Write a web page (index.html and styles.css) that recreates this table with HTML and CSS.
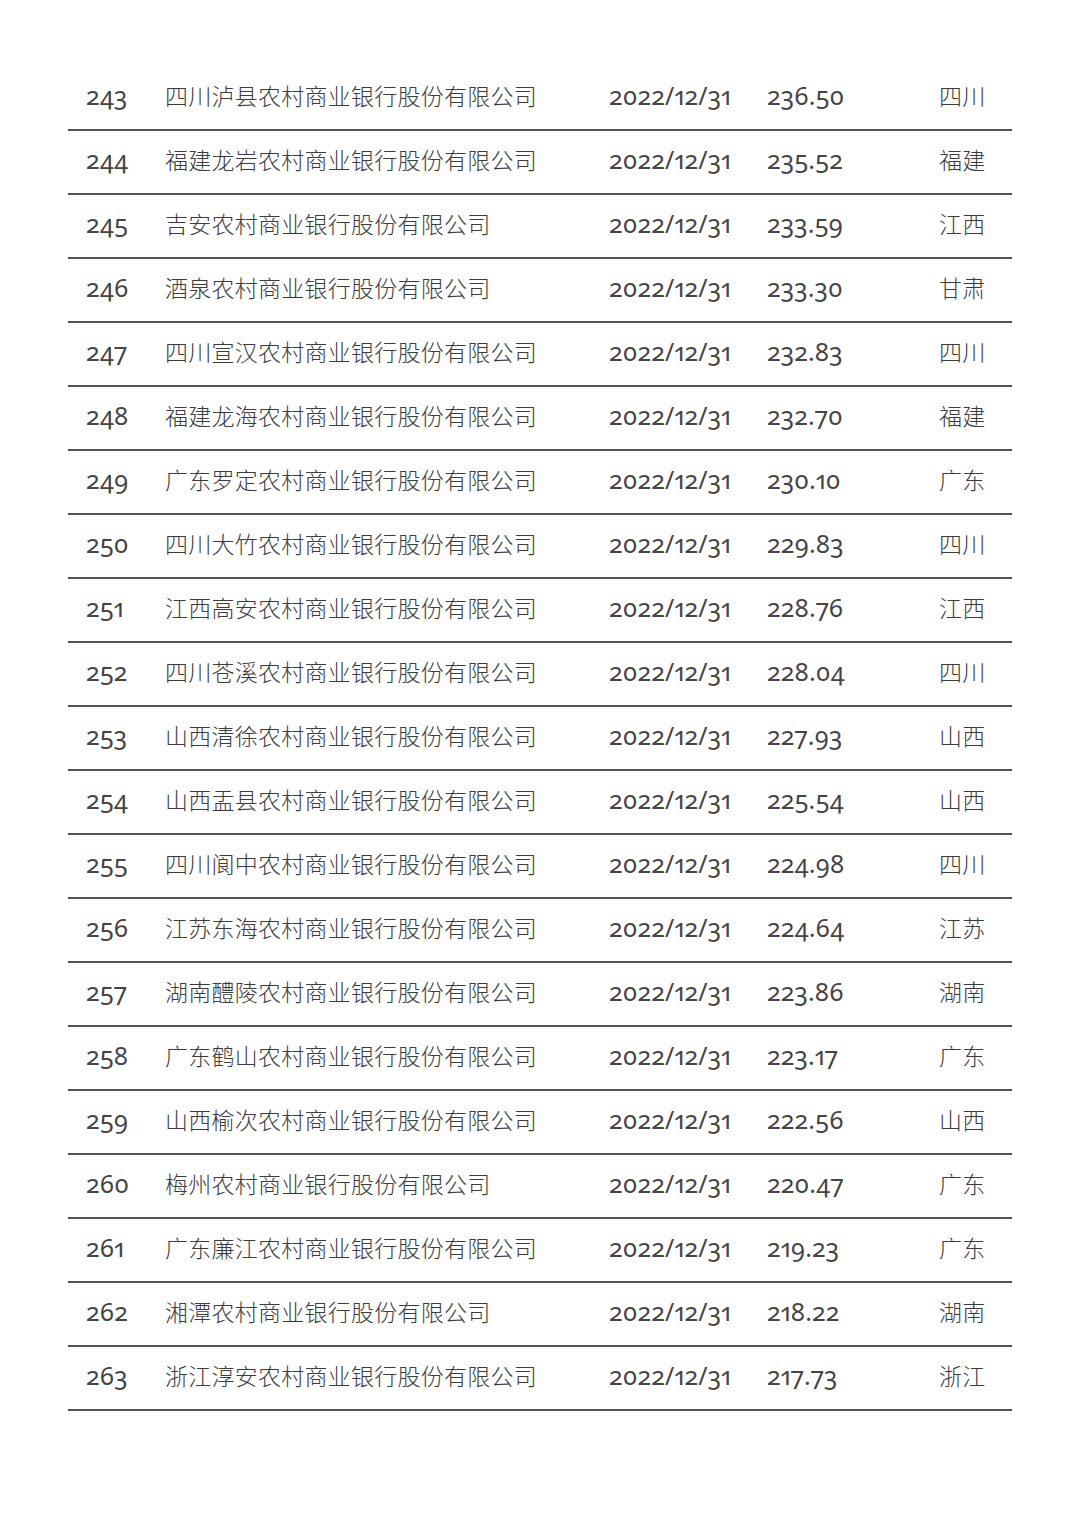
FILE: index.html
```html
<!DOCTYPE html>
<html lang="zh">
<head>
<meta charset="utf-8">
<link rel="stylesheet" href="styles.css">
</head>
<body>
<div class="page">
  <div class="table">
    <div class="row"><span class="c-no">243</span><span class="c-name">四川泸县农村商业银行股份有限公司</span><span class="c-date">2022/12/31</span><span class="c-val">236.50</span><span class="c-prov">四川</span></div>
    <div class="row"><span class="c-no">244</span><span class="c-name">福建龙岩农村商业银行股份有限公司</span><span class="c-date">2022/12/31</span><span class="c-val">235.52</span><span class="c-prov">福建</span></div>
    <div class="row"><span class="c-no">245</span><span class="c-name">吉安农村商业银行股份有限公司</span><span class="c-date">2022/12/31</span><span class="c-val">233.59</span><span class="c-prov">江西</span></div>
    <div class="row"><span class="c-no">246</span><span class="c-name">酒泉农村商业银行股份有限公司</span><span class="c-date">2022/12/31</span><span class="c-val">233.30</span><span class="c-prov">甘肃</span></div>
    <div class="row"><span class="c-no">247</span><span class="c-name">四川宣汉农村商业银行股份有限公司</span><span class="c-date">2022/12/31</span><span class="c-val">232.83</span><span class="c-prov">四川</span></div>
    <div class="row"><span class="c-no">248</span><span class="c-name">福建龙海农村商业银行股份有限公司</span><span class="c-date">2022/12/31</span><span class="c-val">232.70</span><span class="c-prov">福建</span></div>
    <div class="row"><span class="c-no">249</span><span class="c-name">广东罗定农村商业银行股份有限公司</span><span class="c-date">2022/12/31</span><span class="c-val">230.10</span><span class="c-prov">广东</span></div>
    <div class="row"><span class="c-no">250</span><span class="c-name">四川大竹农村商业银行股份有限公司</span><span class="c-date">2022/12/31</span><span class="c-val">229.83</span><span class="c-prov">四川</span></div>
    <div class="row"><span class="c-no">251</span><span class="c-name">江西高安农村商业银行股份有限公司</span><span class="c-date">2022/12/31</span><span class="c-val">228.76</span><span class="c-prov">江西</span></div>
    <div class="row"><span class="c-no">252</span><span class="c-name">四川苍溪农村商业银行股份有限公司</span><span class="c-date">2022/12/31</span><span class="c-val">228.04</span><span class="c-prov">四川</span></div>
    <div class="row"><span class="c-no">253</span><span class="c-name">山西清徐农村商业银行股份有限公司</span><span class="c-date">2022/12/31</span><span class="c-val">227.93</span><span class="c-prov">山西</span></div>
    <div class="row"><span class="c-no">254</span><span class="c-name">山西盂县农村商业银行股份有限公司</span><span class="c-date">2022/12/31</span><span class="c-val">225.54</span><span class="c-prov">山西</span></div>
    <div class="row"><span class="c-no">255</span><span class="c-name">四川阆中农村商业银行股份有限公司</span><span class="c-date">2022/12/31</span><span class="c-val">224.98</span><span class="c-prov">四川</span></div>
    <div class="row"><span class="c-no">256</span><span class="c-name">江苏东海农村商业银行股份有限公司</span><span class="c-date">2022/12/31</span><span class="c-val">224.64</span><span class="c-prov">江苏</span></div>
    <div class="row"><span class="c-no">257</span><span class="c-name">湖南醴陵农村商业银行股份有限公司</span><span class="c-date">2022/12/31</span><span class="c-val">223.86</span><span class="c-prov">湖南</span></div>
    <div class="row"><span class="c-no">258</span><span class="c-name">广东鹤山农村商业银行股份有限公司</span><span class="c-date">2022/12/31</span><span class="c-val">223.17</span><span class="c-prov">广东</span></div>
    <div class="row"><span class="c-no">259</span><span class="c-name">山西榆次农村商业银行股份有限公司</span><span class="c-date">2022/12/31</span><span class="c-val">222.56</span><span class="c-prov">山西</span></div>
    <div class="row"><span class="c-no">260</span><span class="c-name">梅州农村商业银行股份有限公司</span><span class="c-date">2022/12/31</span><span class="c-val">220.47</span><span class="c-prov">广东</span></div>
    <div class="row"><span class="c-no">261</span><span class="c-name">广东廉江农村商业银行股份有限公司</span><span class="c-date">2022/12/31</span><span class="c-val">219.23</span><span class="c-prov">广东</span></div>
    <div class="row"><span class="c-no">262</span><span class="c-name">湘潭农村商业银行股份有限公司</span><span class="c-date">2022/12/31</span><span class="c-val">218.22</span><span class="c-prov">湖南</span></div>
    <div class="row"><span class="c-no">263</span><span class="c-name">浙江淳安农村商业银行股份有限公司</span><span class="c-date">2022/12/31</span><span class="c-val">217.73</span><span class="c-prov">浙江</span></div>
  </div>
</div>
</body>
</html>
```
FILE: styles.css
```css
html, body {
  margin: 0;
  padding: 0;
  background: #ffffff;
}

.page {
  width: 1080px;
  height: 1528px;
  padding: 67px 68px 0 68px;
  box-sizing: border-box;
}

.table {
  width: 944px;
}

.row {
  display: grid;
  grid-template-columns: 97px 444px 158px 172px 73px;
  align-items: center;
  height: 64px;
  box-sizing: border-box;
  border-bottom: 2px solid #555555;
  padding-bottom: 6px;
}

.c-no,
.c-date,
.c-val {
  font-family: "Noto Sans", "Liberation Sans", sans-serif;
  font-feature-settings: "onum" 1, "pnum" 1;
  font-variant-numeric: oldstyle-nums proportional-nums;
  font-weight: 400;
  font-size: 25px;
  letter-spacing: 0.1px;
  color: #444444;
}

.c-no {
  padding-left: 18px;
}

.c-name,
.c-prov {
  font-family: "Noto Sans CJK SC", sans-serif;
  font-weight: 300;
  font-size: 23px;
  letter-spacing: 0.25px;
  color: #3c3c3c;
}
```
